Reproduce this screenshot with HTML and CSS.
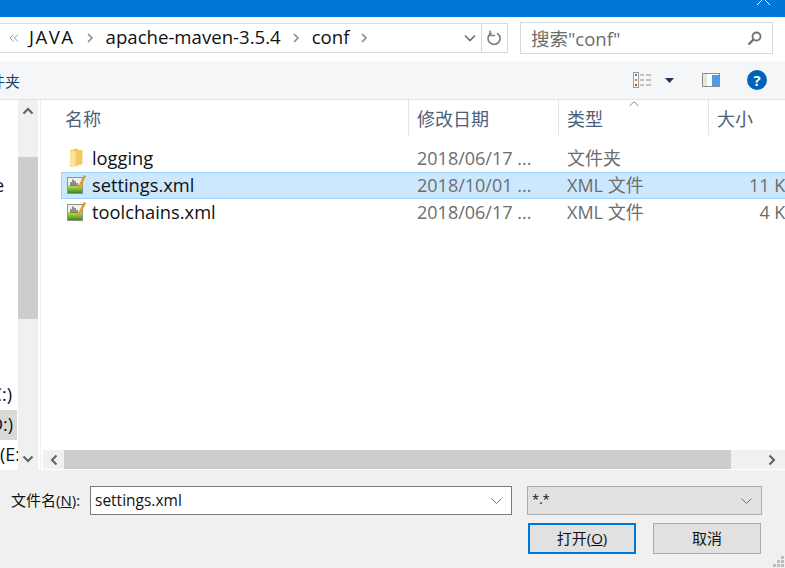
FILE: index.html
```html
<!DOCTYPE html>
<html lang="zh-CN">
  <head>
    <meta charset="utf-8" />
    <title>打开</title>
    <link rel="stylesheet" href="styles.css">
  </head>
  <body>
    <div class="dialog">
      <div class="titlebar">
        <svg class="close" width="14" height="6" viewBox="0 0 14 6"><path d="M0 5L5 0M13 5L8 0" stroke="#fff" fill="none"/></svg>
      </div>

      <div class="navbar">
        <div class="address">
          <svg class="more" width="10" height="8" viewBox="0 0 10 8"><path d="M4.500 .5L1 4l3.500 3.500M9 .5L5.500 4 9 7.500" stroke="#999" fill="none"/></svg>
          <span class="crumb crumb-caps">JAVA</span>
          <svg class="sep" width="7" height="10" viewBox="0 0 7 10"><path d="M1 1l4 4-4 4" stroke="#8a8a8a" stroke-width="1.600" fill="none"/></svg>
          <span class="crumb">apache-maven-3.5.4</span>
          <svg class="sep" width="7" height="10" viewBox="0 0 7 10"><path d="M1 1l4 4-4 4" stroke="#8a8a8a" stroke-width="1.600" fill="none"/></svg>
          <span class="crumb">conf</span>
          <svg class="sep" width="7" height="10" viewBox="0 0 7 10"><path d="M1 1l4 4-4 4" stroke="#8a8a8a" stroke-width="1.600" fill="none"/></svg>
          <svg class="dropdown" width="12" height="8" viewBox="0 0 12 8"><path d="M1 1.500l5 5 5-5" stroke="#6d6d6d" stroke-width="1.600" fill="none"/></svg>
          <div class="refresh">
            <svg width="15" height="16" viewBox="0 0 15 16"><path d="M10 3.200A6 6 0 1 1 4.500 3" stroke="#808080" stroke-width="1.700" fill="none"/><path d="M3 .5v5h5" stroke="#808080" stroke-width="1.500" fill="none"/></svg>
          </div>
        </div>
        <div class="search">
          <span>搜索"conf"</span>
          <svg width="15" height="15" viewBox="0 0 15 15"><circle cx="9.500" cy="5.500" r="4" stroke="#707070" stroke-width="1.800" fill="none"/><path d="M6.500 8.500L1.500 13.500" stroke="#707070" stroke-width="2.400"/></svg>
        </div>
      </div>

      <div class="toolbar">
        <div class="new-folder">文件夹</div>
        <svg class="view-icon" width="18" height="16" viewBox="0 0 18 16">
          <rect x=".5" y=".5" width="5" height="15" fill="#fff" stroke="#999"/>
          <rect x="2" y="2" width="2" height="2" fill="#3a7fc4"/>
          <rect x="2" y="7" width="2" height="2" fill="#a89030"/>
          <rect x="2" y="12" width="2" height="2" fill="#c04020"/>
          <path d="M7 3h4M13 3h5M7 8h4M13 8h5M7 13h4M13 13h5" stroke="#8c8c8c"/>
        </svg>
        <svg class="view-caret" width="9" height="5" viewBox="0 0 9 5"><path d="M0 0h9L4.500 5z" fill="#1c3560"/></svg>
        <svg class="pane-icon" width="18" height="14" viewBox="0 0 18 14">
          <rect x=".5" y=".5" width="17" height="13" fill="#fff" stroke="#8c8c8c"/>
          <rect x="1" y="1" width="4" height="12" fill="#e4e4e4"/>
          <rect x="10" y="2" width="7" height="11" fill="#4a9be6"/>
        </svg>
        <div class="help">?</div>
      </div>

      <div class="main">
        <div class="sidebar">
          <div class="side-row side-e"><span>e</span></div>
          <div class="side-row side-c"><span>(C:)</span></div>
          <div class="side-row side-d"><span>(D:)</span></div>
          <div class="side-row side-last">(E:</div>
        </div>
        <div class="vscroll">
          <svg width="12" height="8" viewBox="0 0 12 8"><path d="M1.500 6.500L6 2l4.500 4.500" stroke="#606060" stroke-width="2" fill="none"/></svg>
          <div class="vthumb"></div>
          <svg class="vdown" width="12" height="8" viewBox="0 0 12 8"><path d="M1.500 1.500L6 6l4.500-4.500" stroke="#606060" stroke-width="2" fill="none"/></svg>
        </div>

        <div class="files">
          <div class="head">
            <div class="col col-name">名称</div>
            <div class="col col-date">修改日期</div>
            <div class="col col-type">
              类型
              <svg class="sort" width="10" height="6" viewBox="0 0 10 6"><path d="M.5 5L5 .8 9.500 5" stroke="#8a8a8a" fill="none"/></svg>
            </div>
            <div class="col col-size">大小</div>
          </div>

          <div class="rows">
            <div class="row">
              <div class="cell-name">
                <svg class="icon" width="19" height="20" viewBox="0 0 19 20"><path d="M3 2h3l1-1.500h3L11.500 2h4v14q-6 2.500-12.500 3z" fill="#f3c766"/><path d="M3 3h5.500v15.500H3z" fill="#fbe29d"/></svg>
                <span class="file-name">logging</span>
              </div>
              <div class="cell-date">2018/06/17 ...</div>
              <div class="cell-type">文件夹</div>
              <div class="cell-size"></div>
            </div>
            <div class="row selected">
              <div class="cell-name">
                <svg class="icon" width="19" height="20" viewBox="0 0 19 20">
                  <defs><linearGradient id="grn" x1="0" y1="0" x2="0" y2="1"><stop offset="0" stop-color="#d2e45a"/><stop offset="1" stop-color="#2e8f1f"/></linearGradient></defs>
                  <rect x=".5" y="2.500" width="15" height="16" fill="#f2f2ea" stroke="#8e9488"/>
                  <rect x="1" y="10" width="14" height="8" fill="url(#grn)"/>
                  <path d="M4 7v4M6 4.500V11M8 6v5M10 8v3" stroke="#2c2c2c"/>
                  <path d="M18 .5L11 14" stroke="#e09a26" stroke-width="2.400"/>
                </svg>
                <span class="file-name">settings.xml</span>
              </div>
              <div class="cell-date">2018/10/01 ...</div>
              <div class="cell-type">XML 文件</div>
              <div class="cell-size">11 KB</div>
            </div>
            <div class="row">
              <div class="cell-name">
                <svg class="icon" width="19" height="20" viewBox="0 0 19 20">
                  <rect x=".5" y="2.500" width="15" height="16" fill="#f2f2ea" stroke="#8e9488"/>
                  <rect x="1" y="10" width="14" height="8" fill="url(#grn)"/>
                  <path d="M4 7v4M6 4.500V11M8 6v5M10 8v3" stroke="#2c2c2c"/>
                  <path d="M18 .5L11 14" stroke="#e09a26" stroke-width="2.400"/>
                </svg>
                <span class="file-name">toolchains.xml</span>
              </div>
              <div class="cell-date">2018/06/17 ...</div>
              <div class="cell-type">XML 文件</div>
              <div class="cell-size">4 KB</div>
            </div>
          </div>

          <div class="hscroll">
            <div class="harrow">
              <svg width="8" height="12" viewBox="0 0 8 12"><path d="M6.500 1.500L2 6l4.500 4.500" stroke="#606060" stroke-width="2" fill="none"/></svg>
            </div>
            <div class="hthumb"></div>
            <div class="harrow-right">
              <svg width="8" height="12" viewBox="0 0 8 12"><path d="M1.500 1.500L6 6l-4.500 4.500" stroke="#606060" stroke-width="2" fill="none"/></svg>
            </div>
          </div>
        </div>
      </div>

      <div class="footer">
        <div class="field-row">
          <label class="name-label">文件名(<u>N</u>):</label>
          <div class="name-input">
            <span>settings.xml</span>
            <svg width="11" height="6" viewBox="0 0 11 6"><path d="M.5 .5l5 5 5-5" stroke="#707070" fill="none"/></svg>
          </div>
          <div class="filter">
            <span>*.*</span>
            <svg width="11" height="6" viewBox="0 0 11 6"><path d="M.5 .5l5 5 5-5" stroke="#707070" fill="none"/></svg>
          </div>
        </div>
        <div class="button-row">
          <button class="btn btn-primary">打开(<u>O</u>)</button>
          <button class="btn">取消</button>
        </div>
        <svg class="grip" width="12" height="12" viewBox="0 0 12 12"><path d="M8 0h3v3H8zM4 4h3v3H4zM8 4h3v3H8zM0 8h3v3H0zM4 8h3v3H4zM8 8h3v3H8z" fill="#bdbdbd"/></svg>
      </div>
    </div>
  </body>
</html>
```

FILE: styles.css
```css
html {
  background: #f0f0f0;
}
body {
  margin: 0;
  font-family: "Open Sans", "Noto Sans CJK SC", sans-serif;
}

.dialog {
  position: relative;
  width: 785px;
  height: 568px;
  overflow: hidden;
  display: flex;
  flex-direction: column;
  background: #f0f0f0;
}

/* Title bar */
.titlebar {
  height: 17px;
  background: #0078d7;
  display: flex;
  justify-content: flex-end;
  padding-right: 14px;
}
.close {
  display: block;
}

/* Address and search */
.navbar {
  height: 44px;
  background: #fff;
  display: flex;
  align-items: flex-start;
  padding-top: 5px;
  box-sizing: border-box;
}
.address {
  margin-top: 1px;
  width: 508px;
  height: 30px;
  box-sizing: border-box;
  border: 1px solid #d9d9d9;
  border-left: 0;
  display: flex;
  align-items: center;
  padding-left: 9px;
  font-size: 18.600px;
  color: #111;
}
.crumb {
  padding-bottom: 4px;
}
.crumb-caps {
  letter-spacing: 1.500px;
}
.more {
  margin-right: 10px;
}
.sep {
  margin: 0 12px;
}
.dropdown {
  margin-left: auto;
  margin-right: 5px;
}
.refresh {
  width: 25px;
  height: 100%;
  border-left: 1px solid #d9d9d9;
  display: flex;
  align-items: center;
  justify-content: center;
}
.search {
  margin-left: 12px;
  width: 253px;
  height: 32px;
  box-sizing: border-box;
  border: 1px solid #d9d9d9;
  display: flex;
  align-items: center;
  justify-content: space-between;
  padding: 0 10px;
  font-size: 18.500px;
  color: #6d6d6d;
}

/* Toolbar */
.toolbar {
  height: 39px;
  box-sizing: border-box;
  background: #f5f6f7;
  border-bottom: 1px solid #e3e3e3;
  display: flex;
  align-items: center;
  font-size: 15px;
  color: #1a3e6e;
}
.new-folder {
  width: 20px;
  display: flex;
  justify-content: flex-end;
  white-space: nowrap;
}
.view-icon {
  margin-left: 613px;
}
.view-caret {
  margin-left: 14px;
}
.pane-icon {
  margin-left: 28px;
}
.help {
  margin-left: 27px;
  width: 20px;
  height: 20px;
  border-radius: 50%;
  background: #0063b8;
  color: #fff;
  font-size: 15px;
  font-weight: 700;
  line-height: 20px;
  text-align: center;
}

/* Main area */
.main {
  height: 370px;
  background: #fff;
  display: flex;
}
.sidebar {
  width: 18px;
  overflow: hidden;
  display: flex;
  flex-direction: column;
  font-size: 18px;
  color: #111;
}
.side-row {
  height: 30px;
  line-height: 28px;
  display: flex;
  justify-content: flex-end;
  white-space: nowrap;
}
.side-e {
  margin-top: 71px;
  padding-right: 14px;
}
.side-c {
  margin-top: 179px;
  padding-right: 6px;
}
.side-d {
  background: #d9d9d9;
  padding-right: 4px;
  margin-right: 1px;
}
.side-last {
  justify-content: flex-start;
}
.vscroll {
  width: 20px;
  background: #f0f0f0;
  display: flex;
  flex-direction: column;
  align-items: center;
  padding-top: 7px;
  box-sizing: border-box;
}
.vthumb {
  width: 100%;
  height: 162px;
  margin-top: 42px;
  background: #cdcdcd;
}
.vdown {
  margin-top: auto;
  margin-bottom: 7px;
}

.files {
  flex: 1;
  min-width: 0;
  margin-left: 2px;
  border-left: 1px solid #f0f0f0;
  display: flex;
  flex-direction: column;
}
.head {
  height: 35px;
  display: grid;
  grid-template-columns: 368px 150px 150px 100px;
  font-size: 18px;
  color: #4c607a;
}
.col {
  position: relative;
  display: flex;
  align-items: center;
  padding-left: 8px;
  border-right: 1px solid #e5e5e5;
  white-space: nowrap;
}
.col-name {
  padding-left: 24px;
}
.col-size {
  border-right: 0;
}
.sort {
  position: absolute;
  left: 70px;
  top: 1px;
}

.rows {
  flex: 1;
  padding-top: 10px;
  font-size: 18px;
  line-height: 20px;
}
.row {
  height: 27px;
  margin-left: 20px;
  box-sizing: border-box;
  border: 1px solid transparent;
  border-right: 0;
  display: grid;
  grid-template-columns: 346px 150px 150px 100px;
  align-items: center;
  white-space: nowrap;
}
.selected {
  background: #cce8ff;
  border-color: #99d1ff;
}
.cell-name {
  display: flex;
  align-items: center;
  color: #111;
}
.file-name {
  font-size: 18.300px;
  padding-bottom: 2px;
}
.icon {
  margin: 0 6px 2px 5px;
}
.cell-date, .cell-type, .cell-size {
  color: #6d6d6d;
  padding-left: 9px;
  padding-bottom: 2px;
}
.cell-size {
  text-align: right;
  padding-right: 11px;
}

.hscroll {
  height: 19px;
  margin-left: 2px;
  margin-bottom: 1px;
  background: #f0f0f0;
  display: flex;
  align-items: center;
}
.harrow {
  width: 21px;
  display: flex;
  justify-content: center;
}
.hthumb {
  width: 667px;
  height: 100%;
  background: #cdcdcd;
}
.harrow-right {
  flex: 1;
  display: flex;
  justify-content: flex-end;
  padding-right: 9px;
}

/* File name and buttons */
.footer {
  flex: 1;
  padding-top: 16px;
  font-size: 15px;
  color: #111;
}
.field-row {
  display: flex;
  align-items: center;
}
.name-label {
  width: 79px;
  margin-left: 11px;
  padding-bottom: 2px;
  white-space: nowrap;
}
.name-input, .filter {
  height: 29px;
  box-sizing: border-box;
  display: flex;
  align-items: center;
  justify-content: space-between;
  padding: 0 4px;
}
.name-input {
  width: 422px;
  background: #fff;
  border: 1px solid #7a7a7a;
  font-size: 15.500px;
}
.name-input span {
  padding-bottom: 2px;
}
.filter {
  margin-left: 15px;
  width: 235px;
  background: #e1e1e1;
  border: 1px solid #adadad;
  font-size: 13px;
}
.filter span {
  padding-bottom: 3px;
}
.name-input svg, .filter svg {
  margin-right: 5px;
}
.button-row {
  margin-top: 8px;
  margin-left: 528px;
  display: flex;
  gap: 17px;
}
.btn {
  width: 108px;
  height: 31px;
  padding: 0 0 2px;
  box-sizing: border-box;
  background: #e1e1e1;
  border: 1px solid #adadad;
  font: inherit;
  color: #111;
}
.btn-primary {
  border: 2px solid #0078d7;
}
.grip {
  position: absolute;
  right: 0;
  bottom: 0;
}
```
